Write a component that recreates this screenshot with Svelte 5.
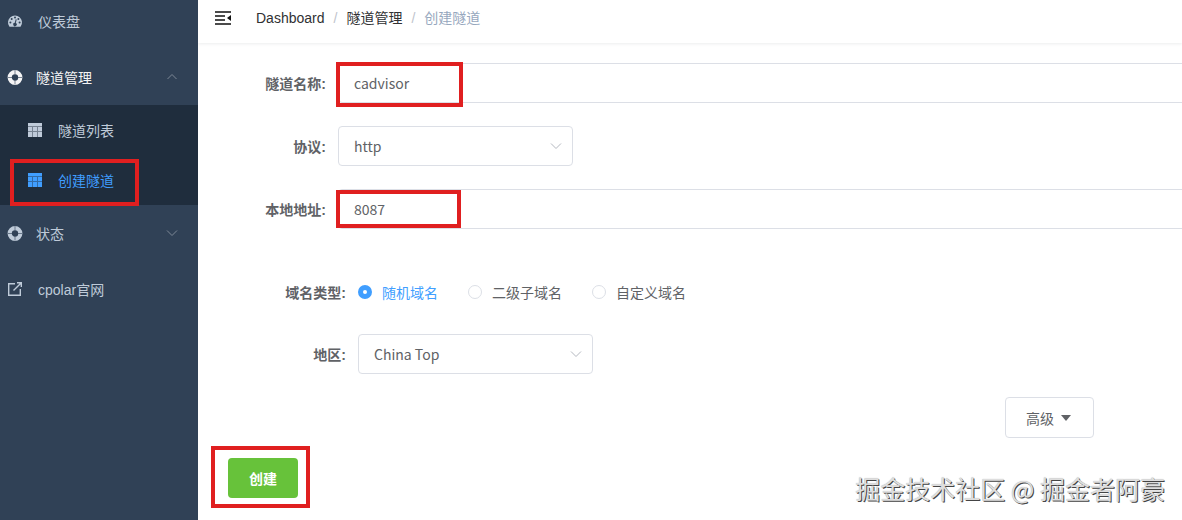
<script lang="ts">
	let name = $state("cadvisor")
	let protocol = $state("http")
	let address = $state("8087")
	let domainType = $state("random")
	let region = $state("cn_top")

	const domainTypes = [
		{ value: "random", text: "随机域名" },
		{ value: "subdomain", text: "二级子域名" },
		{ value: "custom", text: "自定义域名" },
	]
</script>

{#snippet ring()}
	<svg class="icon" viewBox="0 0 14 14" aria-hidden="true">
		<circle cx="7" cy="7.5" r="5.3" fill="none" stroke="currentColor" stroke-width="4.2" />
		<path d="M7 0v4.5M7 10.5v4M0 7.5h4M10 7.5h4" stroke="#304156" stroke-width="1" opacity="0.6" />
	</svg>
{/snippet}

{#snippet grid()}
	<svg class="icon" viewBox="0 0 14 14" aria-hidden="true">
		<path fill="currentColor" d="M0 0h14v3H0zM0 4h4v4H0zM5 4h4v4H5zM10 4h4v4h-4zM0 9h4v5H0zM5 9h4v5H5zM10 9h4v5h-4z" />
		<path fill="currentColor" opacity="0.55" d="M0 3h14v11H0z" />
	</svg>
{/snippet}

{#snippet chevron(up: boolean)}
	<svg class="chevron" viewBox="0 0 12 12" aria-hidden="true">
		<path d={up ? "M1.5 8 6 3.5 10.5 8" : "M1 3.5 6 8.5 11 3.5"} fill="none" stroke="currentColor" />
	</svg>
{/snippet}

<div class="app">
	<nav class="sidebar">
		<a class="item" href="#/dashboard">
			<svg class="icon" viewBox="0 0 14 14" aria-hidden="true">
				<path fill="currentColor" d="M1.2 12.3A7 7 0 1 1 12.8 12.3Q12.6 12.8 12 12.8H2Q1.4 12.8 1.2 12.3z" />
				<g fill="#304156">
					<circle cx="2.4" cy="8.5" r="1" />
					<circle cx="3.7" cy="5" r="1" />
					<circle cx="7" cy="3.5" r="1" />
					<circle cx="10.4" cy="5" r="1" />
					<circle cx="11.6" cy="8.5" r="1" />
					<path d="M7.7 5.2l1 .2-.9 3.6a1.7 1.7 0 1 1-1-.2z" />
				</g>
			</svg>
			<span>仪表盘</span>
		</a>
		<button class="item group open" type="button" aria-expanded="true">
			{@render ring()}
			<span>隧道管理</span>
			{@render chevron(true)}
		</button>
		<div class="submenu">
			<a class="item" href="#/tunnels/list">
				{@render grid()}
				<span>隧道列表</span>
			</a>
			<a class="item active" href="#/tunnels/create">
				{@render grid()}
				<span>创建隧道</span>
				<i class="mark mark-menu"></i>
			</a>
		</div>
		<button class="item group" type="button" aria-expanded="false">
			{@render ring()}
			<span>状态</span>
			{@render chevron(false)}
		</button>
		<a class="item" href="#/website">
			<svg class="icon" viewBox="0 0 14 14" aria-hidden="true">
				<path d="M7 1.7H.7v11.6h11.6V7M5.5 8.5 12.8 1.2M9 .7h4.3V5" fill="none" stroke="currentColor" stroke-width="1.4" />
			</svg>
			<span>cpolar官网</span>
		</a>
	</nav>

	<main>
		<header>
			<button class="hamburger" type="button" aria-label="收起菜单">
				<svg viewBox="0 0 16 14" aria-hidden="true">
					<path d="M0 1h16M0 5h10M0 9h10M0 13h16" fill="none" stroke="currentColor" stroke-width="1.5" />
					<path d="M16 4v6l-4-3z" fill="currentColor" />
				</svg>
			</button>
			<ol class="breadcrumb">
				<li><a href="#/dashboard">Dashboard</a></li>
				<li><a href="#/tunnels">隧道管理</a></li>
				<li class="current">创建隧道</li>
			</ol>
		</header>

		<form>
			<div class="row full">
				<label for="name">隧道名称:</label>
				<div class="field">
					<input id="name" type="text" bind:value={name} />
					<i class="mark mark-name"></i>
				</div>
			</div>
			<div class="row">
				<label for="protocol">协议:</label>
				<div class="select">
					<select id="protocol" bind:value={protocol}>
						<option value="http">http</option>
					</select>
					{@render chevron(false)}
				</div>
			</div>
			<div class="row full">
				<label for="address">本地地址:</label>
				<div class="field">
					<input id="address" type="text" bind:value={address} />
					<i class="mark mark-address"></i>
				</div>
			</div>

			<div class="domain">
				<div class="row" role="radiogroup" aria-labelledby="domain-type">
					<span class="label" id="domain-type">域名类型:</span>
					<div class="radios">
						{#each domainTypes as type}
							<label class="radio" class:checked={domainType === type.value}>
								<input type="radio" name="domain" value={type.value} bind:group={domainType} />
								<span>{type.text}</span>
							</label>
						{/each}
					</div>
				</div>
				<div class="row">
					<label for="region">地区:</label>
					<div class="select">
						<select id="region" bind:value={region}>
							<option value="cn_top">China Top</option>
						</select>
						{@render chevron(false)}
					</div>
				</div>
			</div>

			<div class="more">
				<button class="advanced" type="button">
					高级
					<svg viewBox="0 0 10 6" aria-hidden="true"><path d="M0 0h10L5 6z" fill="currentColor" /></svg>
				</button>
			</div>
			<div class="submit">
				<button class="create" type="button">创建</button>
				<i class="mark mark-create"></i>
			</div>
		</form>
	</main>
</div>

<p class="watermark">掘金技术社区 @ 掘金者阿豪</p>

<style>
	:global(body) {
		overflow: hidden;
		font-family: "Liberation Sans", "Noto Sans CJK SC", sans-serif;
		font-size: 14px;
		color: #606266;
		background: #fff;
	}

	a {
		color: inherit;
		text-decoration: none;
	}
	button,
	input,
	select {
		box-sizing: border-box;
		font: inherit;
		color: inherit;
		margin: 0;
	}
	button {
		border: 0;
		padding: 0;
		background: none;
		cursor: pointer;
	}

	/* the page is scrolled down a little */
	.app {
		display: flex;
		margin-top: -7px;
		min-height: calc(100vh + 7px);
	}

	.sidebar {
		flex: 0 0 198px;
		background: #304156;
		color: #bfcbd9;
	}
	.item {
		position: relative;
		box-sizing: border-box;
		display: flex;
		align-items: center;
		gap: 16px;
		width: 100%;
		height: 56px;
		padding: 0 20px 0 8px;
	}
	.group {
		gap: 14px;
	}
	.open {
		color: #f4f4f5;
	}
	.submenu {
		background: #1f2d3d;
	}
	.submenu .item {
		height: 50px;
		padding-left: 28px;
	}
	.active {
		color: #409eff;
	}
	.icon {
		flex: none;
		width: 14px;
		height: 14px;
		overflow: visible;
	}
	.chevron {
		width: 12px;
		height: 12px;
		color: #909399;
	}
	.item .chevron {
		margin-left: auto;
		color: #7d8896;
	}

	main {
		flex: 1;
		min-width: 0;
		overflow: hidden;
	}
	header {
		display: flex;
		align-items: center;
		gap: 25px;
		height: 50px;
		padding-left: 17px;
		box-shadow: 0 1px 3px rgba(0, 21, 41, 0.08);
	}
	.hamburger {
		color: #111;
	}
	.hamburger svg {
		display: block;
		width: 16px;
		height: 14px;
	}
	.breadcrumb {
		display: flex;
		align-items: baseline;
		margin: 0;
		padding: 0;
		list-style: none;
		line-height: 20px;
		color: #303133;
	}
	.breadcrumb li + li::before {
		content: "/";
		margin: 0 9px;
		color: #c0c4cc;
	}
	.breadcrumb .current {
		color: #97a8be;
	}

	form {
		display: flex;
		flex-direction: column;
		gap: 23px;
		padding: 20px 0 20px 20px;
	}
	.row {
		display: flex;
		align-items: center;
	}
	.row > label,
	.row > .label {
		flex: none;
		box-sizing: border-box;
		width: 120px;
		padding-right: 12px;
		text-align: right;
		font-weight: bold;
	}
	/* text boxes run past the right edge */
	.full {
		margin-right: -20px;
	}
	.field {
		position: relative;
		flex: 1;
	}
	.select {
		position: relative;
		width: 235px;
	}
	.field input,
	select {
		display: block;
		width: 100%;
		height: 40px;
		padding: 0 15px;
		border: 1px solid #dcdfe6;
		border-radius: 4px;
		background: #fff;
		font-family: "Noto Sans CJK SC", sans-serif;
	}
	select {
		appearance: none;
	}
	.select .chevron {
		position: absolute;
		top: 14px;
		right: 11px;
		color: #b4b8c0;
		pointer-events: none;
	}

	.domain {
		display: flex;
		flex-direction: column;
		gap: 22px;
		margin-top: 20px;
		padding-left: 20px;
	}
	.radios {
		display: flex;
		align-items: center;
		gap: 30px;
		height: 40px;
	}
	.radio {
		display: flex;
		align-items: center;
		gap: 10px;
	}
	.radio input {
		appearance: none;
		width: 14px;
		height: 14px;
		border: 1px solid #dcdfe6;
		border-radius: 50%;
		background: #fff;
	}
	.radio.checked {
		color: #409eff;
	}
	.radio.checked input {
		border: 5px solid #409eff;
	}

	.more {
		display: flex;
		justify-content: flex-end;
		padding-right: 88px;
	}
	.advanced {
		display: flex;
		align-items: center;
		gap: 7px;
		height: 41px;
		padding: 0 22px 0 20px;
		border: 1px solid #dcdfe6;
		border-radius: 4px;
	}
	.advanced svg {
		width: 10px;
		height: 6px;
	}
	.submit {
		position: relative;
		align-self: flex-start;
		margin: -3px 0 0 10px;
	}
	.create {
		display: block;
		height: 40px;
		padding: 0 21px;
		border-radius: 4px;
		background: #67c23a;
		color: #fff;
		font-weight: bold;
	}

	.mark {
		position: absolute;
		box-sizing: border-box;
		border: 4px solid #e01f20;
		pointer-events: none;
	}
	.mark-menu {
		left: 10px;
		top: 4px;
		width: 129px;
		height: 47px;
	}
	.mark-name {
		left: -2px;
		top: -1px;
		width: 127px;
		height: 45px;
	}
	.mark-address {
		left: -2px;
		top: 1px;
		width: 125px;
		height: 38px;
	}
	.mark-create {
		inset: -12px -12px -10px -17px;
	}

	.watermark {
		position: absolute;
		right: 17px;
		bottom: 14px;
		margin: 0;
		font-family: "Noto Sans CJK SC", sans-serif;
		font-size: 25px;
		line-height: 36px;
		color: #dedede;
		text-shadow: 1px 1px 0 #444, 0 0 1px #aaa;
	}
</style>
